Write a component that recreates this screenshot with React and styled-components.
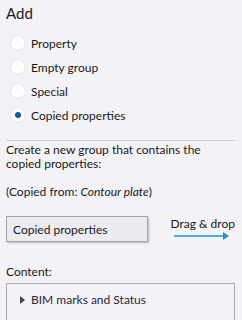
import React from "react";
import styled, { createGlobalStyle } from "styled-components";

const GlobalStyle = createGlobalStyle`
  html, body {
    margin: 0;
    padding: 0;
    background: #f2f2f7;
  }
  body {
    font-family: "Segoe UI", Lato, "Noto Sans", sans-serif;
    font-size: 12px;
    color: #1a1a1a;
  }
`;

const Panel = styled.div`
  width: 242px;
  height: 320px;
  overflow: hidden;
  box-sizing: border-box;
  padding: 3px 7px 0 6px;
  display: flex;
  flex-direction: column;
`;

const Title = styled.div`
  font-size: 15px;
  line-height: 20px;
  margin-bottom: 9px;
`;

const Options = styled.div`
  display: flex;
  flex-direction: column;
  gap: 2px;
  padding-left: 5px;
`;

const Option = styled.label`
  display: flex;
  align-items: center;
  height: 22px;
  gap: 6px;
`;

const Radio = styled.span`
  width: 14px;
  height: 14px;
  border-radius: 50%;
  background: #ffffff;
  box-shadow: 0 0 1px rgba(0, 0, 0, 0.25);
  display: flex;
  align-items: center;
  justify-content: center;

  &::after {
    content: "";
    width: 6px;
    height: 6px;
    border-radius: 50%;
    background: ${(p) => (p.checked ? "#0a5a9c" : "transparent")};
  }
`;

const Divider = styled.div`
  height: 1px;
  background: #cdcdd3;
  margin: 14px 0 2px;
`;

const Text = styled.p`
  margin: 0;
  line-height: 14px;
`;

const Source = styled.p`
  margin: 14px 0 0;
  line-height: 14px;
`;

const DragRow = styled.div`
  display: flex;
  align-items: flex-start;
  justify-content: space-between;
  margin-top: 17px;
`;

const DragButton = styled.div`
  width: 142px;
  height: 26px;
  box-sizing: border-box;
  border: 1px solid #a3a3a8;
  background: #ebebf0;
  box-shadow: 1px 1px 2px rgba(0, 0, 0, 0.25);
  padding-left: 6px;
  display: flex;
  align-items: center;
`;

const Hint = styled.div`
  display: flex;
  flex-direction: column;
  align-items: flex-end;
  line-height: 16px;

  svg {
    margin-right: 5px;
  }
`;

const Label = styled.div`
  margin-top: 23px;
  line-height: 14px;
`;

const ContentBox = styled.div`
  margin-top: 4px;
  flex: 1;
  border: 1px solid #acacb0;
  border-bottom: none;
  padding: 8px 0 0 13px;
`;

const TreeItem = styled.div`
  display: flex;
  align-items: center;
  gap: 6px;
  color: #2b2838;
`;

const options = ["Property", "Empty group", "Special", "Copied properties"];

const App = () => (
  <>
    <GlobalStyle />
    <Panel>
      <Title>Add</Title>
      <Options>
        {options.map((name) => (
          <Option key={name}>
            <Radio checked={name === "Copied properties"} />
            {name}
          </Option>
        ))}
      </Options>
      <Divider />
      <Text>Create a new group that contains the copied properties:</Text>
      <Source>
        (Copied from: <i>Contour plate</i>)
      </Source>
      <DragRow>
        <DragButton>Copied properties</DragButton>
        <Hint>
          Drag &amp; drop
          <svg width="56" height="8" viewBox="0 0 56 8">
            <line x1="0" y1="4" x2="50" y2="4" stroke="#4bb0e0" strokeWidth="2" />
            <polygon points="49,0 55,4 49,8" fill="#1f8fd0" />
          </svg>
        </Hint>
      </DragRow>
      <Label>Content:</Label>
      <ContentBox>
        <TreeItem>
          <svg width="5" height="8" viewBox="0 0 5 8">
            <polygon points="0,0 5,4 0,8" fill="#444" />
          </svg>
          BIM marks and Status
        </TreeItem>
      </ContentBox>
    </Panel>
  </>
);

export default App;
